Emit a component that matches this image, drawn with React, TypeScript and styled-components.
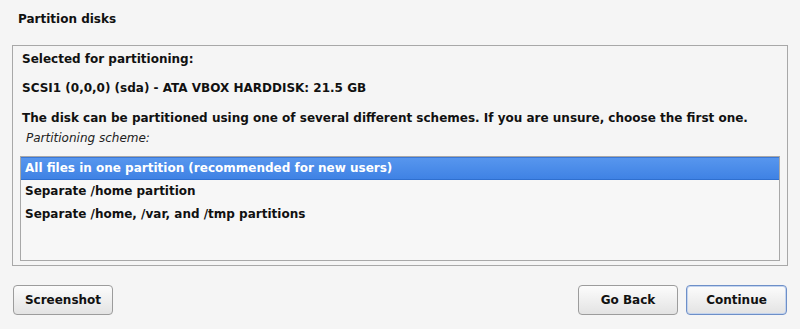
import React from "react";
import styled, { createGlobalStyle } from "styled-components";

const Global = createGlobalStyle`
  html, body { margin: 0; padding: 0; background: #f5f5f5; }
  body { font-family: "DejaVu Sans", sans-serif; font-size: 12px; color: #111; }
`;

const Page = styled.div`
  width: 800px;
  height: 329px;
  box-sizing: border-box;
  display: flex;
  flex-direction: column;
  padding: 9px 12px 0 12px;
`;

const Title = styled.div`
  font-weight: bold;
  font-size: 12px;
  height: 20px;
  line-height: 20px;
  padding-left: 6px;
  margin-bottom: 16px;
`;

const Panel = styled.div`
  box-sizing: border-box;
  width: 776px;
  height: 221px;
  border: 1px solid #a8a8a8;
  display: flex;
  flex-direction: column;
  padding: 3px 7px 0 7px;
`;

const Line = styled.div<{ $gap?: number }>`
  font-weight: bold;
  font-size: 12px;
  line-height: 20px;
  padding-left: 2px;
  white-space: nowrap;
  margin-bottom: ${(p) => p.$gap ?? 0}px;
`;

const Caption = styled.div`
  font-style: italic;
  font-size: 12px;
  line-height: 20px;
  padding-left: 6px;
  color: #222;
`;

const List = styled.div`
  box-sizing: border-box;
  margin-top: 8px;
  width: 760px;
  height: 105px;
  border: 1px solid #a8a8a8;
  background: #f7f7f7;
  padding: 0;
  display: flex;
  flex-direction: column;
`;

const Row = styled.div<{ $selected?: boolean }>`
  box-sizing: border-box;
  height: 23px;
  line-height: 21px;
  padding-left: 4px;
  font-weight: bold;
  font-size: 12px;
  color: ${(p) => (p.$selected ? "#ffffff" : "#111")};
  background: ${(p) =>
    p.$selected ? "linear-gradient(#5796ee, #3f82e4)" : "transparent"};
  border-top: 1px solid ${(p) => (p.$selected ? "#3b78d6" : "transparent")};
  border-bottom: 1px solid ${(p) => (p.$selected ? "#2f6fcf" : "transparent")};
`;

const Footer = styled.div`
  display: flex;
  align-items: center;
  margin-top: 19px;
  padding-left: 1px;
  padding-right: 1px;
  gap: 8px;
`;

const Spacer = styled.div`
  flex: 1;
`;

const Button = styled.button<{ $focus?: boolean }>`
  box-sizing: border-box;
  width: ${(p) => (p.$focus ? 101 : 100)}px;
  height: 30px;
  border-radius: 4px;
  border: 1px solid ${(p) => (p.$focus ? "#6d8fc8" : "#9c9c9c")};
  background: linear-gradient(#fcfcfc, #e3e3e3);
  font-family: "DejaVu Sans", sans-serif;
  font-weight: bold;
  font-size: 12px;
  color: #111;
  padding: 0;
  box-shadow: ${(p) => (p.$focus ? "inset 0 0 0 1px #c4d4ee" : "none")};
`;

export default function App() {
  return (
    <>
      <Global />
      <Page>
        <Title>Partition disks</Title>
        <Panel>
          <Line $gap={9}>Selected for partitioning:</Line>
          <Line $gap={10}>SCSI1 (0,0,0) (sda) - ATA VBOX HARDDISK: 21.5 GB</Line>
          <Line>
            The disk can be partitioned using one of several different schemes. If you are unsure, choose the first one.
          </Line>
          <Caption>Partitioning scheme:</Caption>
          <List>
            <Row $selected>All files in one partition (recommended for new users)</Row>
            <Row>Separate /home partition</Row>
            <Row>Separate /home, /var, and /tmp partitions</Row>
          </List>
        </Panel>
        <Footer>
          <Button>Screenshot</Button>
          <Spacer />
          <Button>Go Back</Button>
          <Button $focus>Continue</Button>
        </Footer>
      </Page>
    </>
  );
}
